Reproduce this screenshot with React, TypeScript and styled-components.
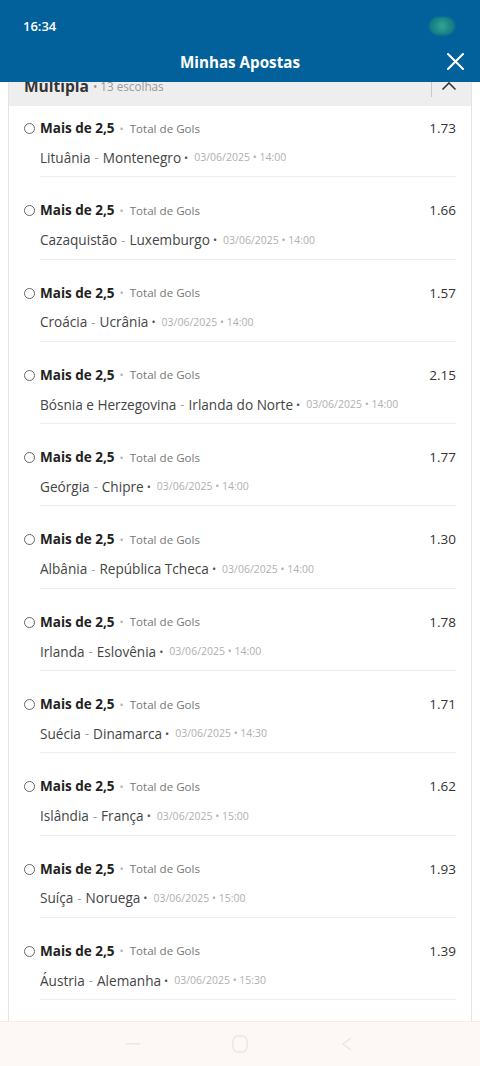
import React from "react";
import styled, { createGlobalStyle } from "styled-components";

const GlobalStyle = createGlobalStyle`
  html, body {
    margin: 0;
    padding: 0;
    background: #ffffff;
    font-family: "Open Sans", "Noto Sans", sans-serif;
  }
  * { box-sizing: border-box; }
`;

const Screen = styled.div`
  width: 480px;
  height: 100vh;
  display: flex;
  flex-direction: column;
  overflow: hidden;
  background: #ffffff;
`;

const TopBar = styled.div`
  background: #02609a;
  color: #ffffff;
  flex-shrink: 0;
  position: relative;
  z-index: 2;
`;

const StatusBar = styled.div`
  height: 42px;
  display: flex;
  align-items: center;
  justify-content: space-between;
  padding: 9px 25px 0 23px;
  font-size: 13px;
  font-weight: 600;
`;

const Toggle = styled.div`
  width: 26px;
  height: 18px;
  border-radius: 9px;
  background: radial-gradient(circle at 50% 50%, #3aa59a 0%, #1c8a85 45%, #0f6f8a 100%);
  filter: blur(1px);
`;

const Header = styled.div`
  height: 40px;
  display: flex;
  align-items: center;
  justify-content: center;
  position: relative;
  font-size: 15.2px;
  font-weight: 700;
`;

const CloseButton = styled.div`
  position: absolute;
  right: 15px;
  top: 10px;
  width: 19px;
  height: 19px;
  display: flex;
`;

const Content = styled.div`
  flex: 1;
  overflow: hidden;
  padding: 0 8px;
`;

const Card = styled.div`
  margin-top: -17px;
  border: 1px solid #e4e4e4;
  border-top: none;
  background: #ffffff;
  min-height: 1100px;
`;

const CardHeader = styled.div`
  height: 41px;
  background: #eeeeee;
  display: flex;
  align-items: center;
  padding: 0 14px 0 15px;
`;

const CardTitle = styled.span`
  font-size: 15.5px;
  font-weight: 700;
  color: #333333;
`;

const CardCount = styled.span`
  font-size: 11.7px;
  color: #9a9a9a;
  margin-left: 4px;
  flex: 1;
`;

const Divider = styled.div`
  width: 1px;
  height: 22px;
  background: #c8c8c8;
  margin-right: 9px;
`;

const Row = styled.div`
  display: flex;
  padding: 22px 15px 0 15px;

  &:first-child {
    padding-top: 11px;
  }
`;

const Radio = styled.div`
  width: 11px;
  height: 11px;
  border-radius: 50%;
  border: 1px solid #666666;
  margin: 6px 5px 0 0;
  flex-shrink: 0;
`;

const Body = styled.div`
  flex: 1;
  border-bottom: 1px solid #ececec;
  padding-bottom: 8px;
`;

const LineOne = styled.div`
  display: flex;
  align-items: center;
  height: 22px;
`;

const Selection = styled.span`
  font-size: 13.5px;
  font-weight: 700;
  color: #222222;
`;

const Dot = styled.span<{ $tone?: "light" | "dark" }>`
  color: ${(p) => (p.$tone === "dark" ? "#555555" : "#b5b5b5")};
  font-size: 11px;
  margin: ${(p) => (p.$tone === "dark" ? "0 0 0 3px" : "0 6px 0 5px")};
`;

const Market = styled.span`
  font-size: 11.6px;
  color: #777777;
  flex: 1;
`;

const Odds = styled.span`
  font-size: 13.5px;
  color: #333333;
`;

const LineTwo = styled.div`
  display: flex;
  align-items: center;
  height: 22px;
  margin-top: 7.3px;
  white-space: nowrap;
`;

const Team = styled.span`
  font-size: 13.6px;
  color: #444444;
`;

const Dash = styled.span`
  font-size: 13px;
  color: #a0a0a0;
  margin: 0 4px;
`;

const DateText = styled.span`
  font-size: 10.5px;
  color: #b0b0b0;
  margin-left: 6px;
`;

const NavBar = styled.div`
  height: 45px;
  flex-shrink: 0;
  background: #fdf8f6;
  border-top: 1px solid #fbe9e4;
  display: flex;
  align-items: center;
  justify-content: space-around;
  padding: 0 80px;
  position: relative;
  z-index: 2;
`;

const NavIcon = styled.div`
  width: 24px;
  height: 24px;
  display: flex;
  align-items: center;
  justify-content: center;
`;

type Pick = {
  home: string;
  away: string;
  odds: string;
  time: string;
};

const picks: Pick[] = [
  { home: "Lituânia", away: "Montenegro", odds: "1.73", time: "14:00" },
  { home: "Cazaquistão", away: "Luxemburgo", odds: "1.66", time: "14:00" },
  { home: "Croácia", away: "Ucrânia", odds: "1.57", time: "14:00" },
  { home: "Bósnia e Herzegovina", away: "Irlanda do Norte", odds: "2.15", time: "14:00" },
  { home: "Geórgia", away: "Chipre", odds: "1.77", time: "14:00" },
  { home: "Albânia", away: "República Tcheca", odds: "1.30", time: "14:00" },
  { home: "Irlanda", away: "Eslovênia", odds: "1.78", time: "14:00" },
  { home: "Suécia", away: "Dinamarca", odds: "1.71", time: "14:30" },
  { home: "Islândia", away: "França", odds: "1.62", time: "15:00" },
  { home: "Suíça", away: "Noruega", odds: "1.93", time: "15:00" },
  { home: "Áustria", away: "Alemanha", odds: "1.39", time: "15:30" },
  { home: "Holanda", away: "Finlândia", odds: "1.45", time: "15:45" },
];

export default function App() {
  return (
    <Screen>
      <GlobalStyle />
      <TopBar>
        <StatusBar>
          <span>16:34</span>
          <Toggle />
        </StatusBar>
        <Header>
          Minhas Apostas
          <CloseButton>
            <svg width="19" height="19" viewBox="0 0 19 19">
              <path d="M2 2 L17 17 M17 2 L2 17" stroke="#ffffff" strokeWidth="2.1" strokeLinecap="round" />
            </svg>
          </CloseButton>
        </Header>
      </TopBar>

      <Content>
        <Card>
          <CardHeader>
            <CardTitle>Múltipla</CardTitle>
            <CardCount>• 13 escolhas</CardCount>
            <Divider />
            <svg width="16" height="10" viewBox="0 0 16 10">
              <path d="M1.5 8.5 L8 2 L14.5 8.5" stroke="#333333" strokeWidth="1.6" fill="none" />
            </svg>
          </CardHeader>
          <div>
            {picks.map((p) => (
              <Row key={p.home}>
                <Radio />
                <Body>
                  <LineOne>
                    <Selection>Mais de 2,5</Selection>
                    <Dot>•</Dot>
                    <Market>Total de Gols</Market>
                    <Odds>{p.odds}</Odds>
                  </LineOne>
                  <LineTwo>
                    <Team>{p.home}</Team>
                    <Dash>-</Dash>
                    <Team>{p.away}</Team>
                    <Dot $tone="dark">•</Dot>
                    <DateText>03/06/2025 • {p.time}</DateText>
                  </LineTwo>
                </Body>
              </Row>
            ))}
          </div>
        </Card>
      </Content>

      <NavBar>
        <NavIcon>
          <svg width="14" height="4" viewBox="0 0 14 4">
            <rect x="0" y="1" width="14" height="1.5" fill="#ece6e4" />
          </svg>
        </NavIcon>
        <NavIcon>
          <svg width="16" height="18" viewBox="0 0 16 18">
            <rect x="1" y="1" width="14" height="16" rx="5" stroke="#ece6e4" strokeWidth="1.5" fill="none" />
          </svg>
        </NavIcon>
        <NavIcon>
          <svg width="12" height="14" viewBox="0 0 12 14">
            <path d="M10 1 L2 7 L10 13" stroke="#ece6e4" strokeWidth="1.5" fill="none" />
          </svg>
        </NavIcon>
      </NavBar>
    </Screen>
  );
}
